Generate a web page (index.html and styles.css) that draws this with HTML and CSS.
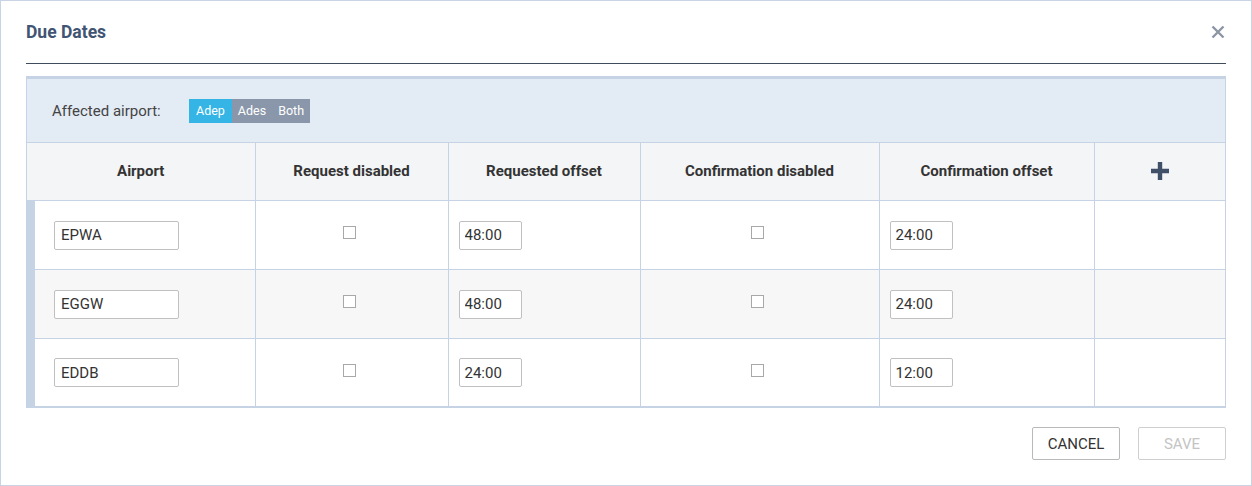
FILE: index.html
```html
<!DOCTYPE html>
<html>
<head>
<meta charset="utf-8">
<link rel="stylesheet" href="styles.css">
</head>
<body>
<div class="dialog">
  <div class="dlg-head">
    <h1 class="title">Due Dates</h1>
    <span class="close"><svg width="14" height="14" viewBox="0 0 14 14"><path d="M1.5 1.5 L12.5 12.5 M12.5 1.5 L1.5 12.5" stroke="#8c96a3" stroke-width="2.4" fill="none"/></svg></span>
  </div>
  <div class="panel">
    <div class="filter">
      <span class="filter-label">Affected airport:</span>
      <div class="seg">
        <span class="seg-btn active">Adep</span><span class="seg-btn">Ades</span><span class="seg-btn">Both</span>
      </div>
    </div>
    <table class="grid">
      <colgroup>
        <col class="c1"><col class="c2"><col class="c3"><col class="c4"><col class="c5"><col class="c6">
      </colgroup>
      <thead>
        <tr>
          <th>Airport</th>
          <th>Request disabled</th>
          <th>Requested offset</th>
          <th>Confirmation disabled</th>
          <th>Confirmation offset</th>
          <th><svg width="20" height="20" viewBox="0 0 20 20"><path d="M10 1 V19 M1 10 H19" stroke="#3f5068" stroke-width="4.4" fill="none"/></svg></th>
        </tr>
      </thead>
      <tbody>
        <tr>
          <td class="first"><input class="txt airport" value="EPWA"></td>
          <td class="center"><input type="checkbox" class="chk"></td>
          <td><input class="txt offset" value="48:00"></td>
          <td class="center"><input type="checkbox" class="chk"></td>
          <td><input class="txt offset" value="24:00"></td>
          <td></td>
        </tr>
        <tr class="alt">
          <td class="first"><input class="txt airport" value="EGGW"></td>
          <td class="center"><input type="checkbox" class="chk"></td>
          <td><input class="txt offset" value="48:00"></td>
          <td class="center"><input type="checkbox" class="chk"></td>
          <td><input class="txt offset" value="24:00"></td>
          <td></td>
        </tr>
        <tr class="last">
          <td class="first"><input class="txt airport" value="EDDB"></td>
          <td class="center"><input type="checkbox" class="chk"></td>
          <td><input class="txt offset" value="24:00"></td>
          <td class="center"><input type="checkbox" class="chk"></td>
          <td><input class="txt offset" value="12:00"></td>
          <td></td>
        </tr>
      </tbody>
    </table>
  </div>
  <div class="footer">
    <button class="btn">CANCEL</button>
    <button class="btn disabled">SAVE</button>
  </div>
</div>
</body>
</html>
```

FILE: styles.css
```css
html, body {
  margin: 0;
  padding: 0;
  background: #fff;
}
body {
  font-family: Roboto, "Liberation Sans", Arial, sans-serif;
  color: #333;
}
.dialog {
  box-sizing: border-box;
  width: 1252px;
  height: 486px;
  border: 1px solid #c8d3e3;
  padding: 0 25px;
}
.dlg-head {
  display: flex;
  align-items: center;
  justify-content: space-between;
  height: 62px;
  border-bottom: 1px solid #3e4c5c;
}
.title {
  margin: 0;
  font-size: 17.5px;
  line-height: 20px;
  font-weight: 700;
  color: #3f5573;
}
.close {
  display: flex;
  margin-right: 1px;
}
.panel {
  margin-top: 12px;
  border-top: 3px solid #c5d3e5;
  border-left: 1px solid #c5d3e5;
  border-right: 1px solid #c5d3e5;
  border-bottom: 2px solid #c5d3e5;
}
.filter {
  display: flex;
  align-items: center;
  height: 63px;
  background: #e3ebf5;
  padding-left: 25px;
}
.filter-label {
  font-size: 15px;
  color: #444;
  width: 137px;
}
.seg {
  display: flex;
}
.seg-btn {
  display: block;
  height: 24px;
  line-height: 24px;
  font-size: 12.5px;
  color: #fff;
  background: #8a97aa;
  padding: 0 6px;
}
.seg-btn.active {
  background: #35b5e5;
  padding: 0 7px;
}
.grid {
  width: 100%;
  border-collapse: collapse;
  table-layout: fixed;
}
.c1 { width: 228px; }
.c2 { width: 193px; }
.c3 { width: 192px; }
.c4 { width: 239px; }
.c5 { width: 215px; }
.c6 { width: auto; }
.grid th {
  height: 55px;
  background: #f4f5f7;
  border-top: 1px solid #c5d3e5;
  border-left: 1px solid #c5d3e5;
  font-size: 15px;
  font-weight: 700;
  color: #333;
  text-align: center;
  vertical-align: middle;
  padding: 0 0 2px 0;
}
.grid th svg {
  display: block;
  margin: 0 auto;
}
.grid th:first-child,
.grid td:first-child {
  border-left: none;
}
.grid td {
  height: 68px;
  border-top: 1px solid #c5d3e5;
  border-left: 1px solid #c5d3e5;
  padding: 0 0 0 10px;
  vertical-align: middle;
  background: #fff;
}
.grid tr.alt td {
  background: #f7f7f7;
}
.grid tr.last td {
  height: 67px;
}
.grid td.first {
  box-shadow: inset 8px 0 0 #c5d3e5;
  padding-left: 27px;
}
.grid td.center {
  text-align: center;
  padding: 0;
}
.txt {
  box-sizing: border-box;
  height: 29px;
  border: 1px solid #c0c0c0;
  border-radius: 2px;
  font-family: Roboto, "Liberation Sans", Arial, sans-serif;
  font-size: 15px;
  color: #333;
  padding: 0 6px;
  background: #fff;
  display: block;
  outline: none;
}
.txt.airport {
  width: 125px;
}
.txt.offset {
  width: 63px;
  padding: 0 5px;
}
.chk {
  appearance: none;
  -webkit-appearance: none;
  box-sizing: border-box;
  width: 13px;
  height: 13px;
  margin: 0 5px 6px 0;
  border: 1px solid #a8a8a8;
  background: #fff;
  vertical-align: middle;
}
.footer {
  display: flex;
  justify-content: flex-end;
  gap: 18px;
  margin-top: 19px;
}
.btn {
  box-sizing: border-box;
  width: 88px;
  height: 33px;
  border: 1px solid #b9b9b9;
  border-radius: 2px;
  background: #fff;
  font-family: Roboto, "Liberation Sans", Arial, sans-serif;
  font-size: 15px;
  color: #333;
  padding: 0;
}
.btn.disabled {
  color: #c4c4c4;
  border-color: #cfcfcf;
}
```
